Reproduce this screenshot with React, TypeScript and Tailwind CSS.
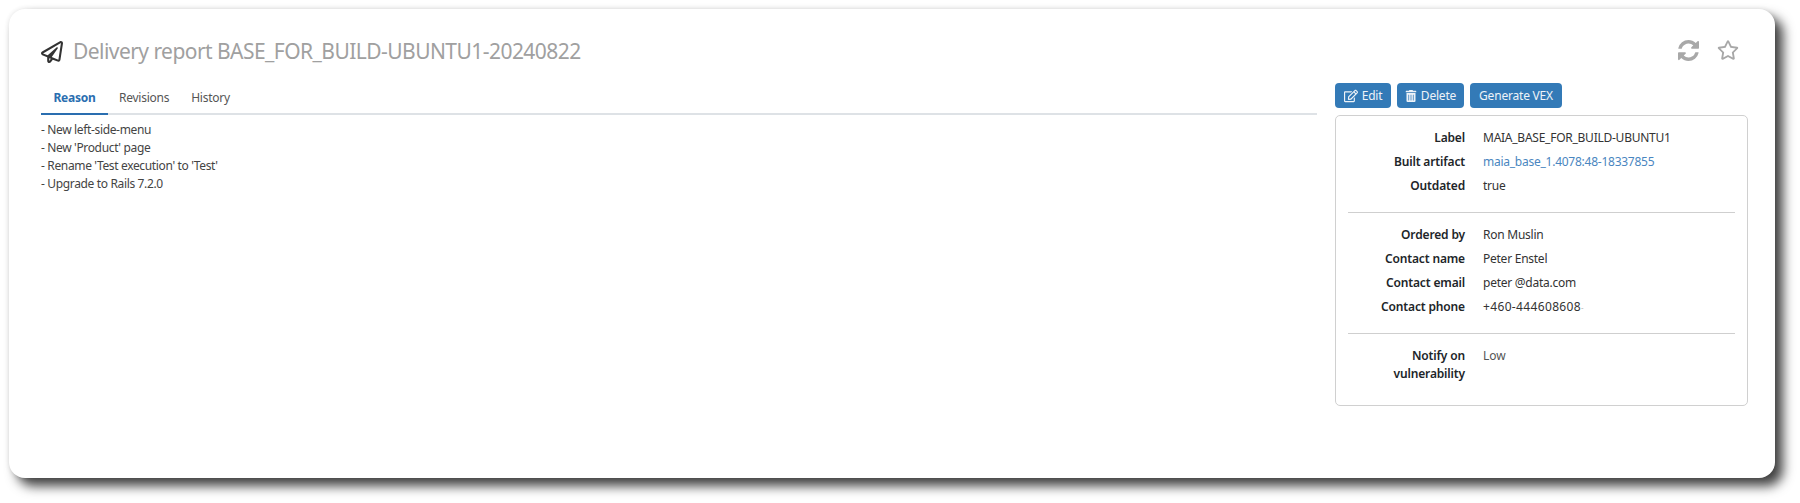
import { FaRegPaperPlane, FaRegStar, FaRegEdit, FaTrashAlt } from "react-icons/fa";

const groups: { k: string; v: string; link?: boolean; wide?: boolean }[][] = [
  [
    { k: "Label", v: "MAIA_BASE_FOR_BUILD-UBUNTU1" },
    { k: "Built artifact", v: "maia_base_1.4078:48-18337855", link: true },
    { k: "Outdated", v: "true" },
  ],
  [
    { k: "Ordered by", v: "Ron Muslin" },
    { k: "Contact name", v: "Peter Enstel" },
    { k: "Contact email", v: "peter @data.com" },
    { k: "Contact phone", v: "+460-444608608", wide: true },
  ],
];

function Row({ k, v, link, wide }: { k: string; v: string; link?: boolean; wide?: boolean }) {
  return (
    <div className="flex h-6 items-center">
      <div className="w-[117px] text-right font-semibold tracking-[-0.15px] text-[#212529]">{k}</div>
      <div className={`ml-[18px] ${wide ? "tracking-[0.35px]" : "tracking-[-0.25px]"} ${link ? "text-[#4a86c0]" : "text-[#333]"}`}>
        {v}
        {wide && <span className="text-[#bbb] text-[8px]">-</span>}
      </div>
    </div>
  );
}

const btn = "flex h-[25px] items-center justify-center gap-[4px] rounded-[4px] bg-[#337ab7] tracking-[-0.2px] text-[#eef3f8]";

export default function App() {
  return (
    <div className="h-[503px] overflow-hidden bg-white pl-[9px] pt-[9px] font-['Noto_Sans','Open_Sans',sans-serif] text-[12px]">
      <div className="h-[469px] w-[1766px] rounded-[16px] bg-white pl-[32px] pr-[27px] shadow-[8px_8px_12px_rgba(0,0,0,0.75),0_0_5px_rgba(0,0,0,0.1)]">
        <div className="flex h-[74px] items-center justify-between pt-[12px]">
          <div className="flex items-center gap-[10px]">
            <FaRegPaperPlane className="h-[22px] w-[22px] text-[#333]" />
            <h1 className="text-[21px] font-normal tracking-[-0.55px] text-[#a0a0a0]">Delivery report BASE_FOR_BUILD-UBUNTU1-20240822</h1>
          </div>
          <div className="mb-[4px] mr-[9px] flex items-center gap-[18px] text-[#a8a8a8]">
            <svg viewBox="128 128 1536 1536" className="h-[21px] w-[21px]" fill="currentColor">
              <path d="M1639 1056q0 5-1 7-64 268-268 434.5t-478 166.5q-146 0-282.5-55t-243.5-157l-129 129q-19 19-45 19t-45-19-19-45v-448q0-26 19-45t45-19h448q26 0 45 19t19 45-19 45l-137 137q71 66 161 102t187 36q134 0 250-65t186-179q11-17 53-117 8-23 30-23h192q13 0 22.5 9.5t9.5 22.5zm25-800v448q0 26-19 45t-45 19h-448q-26 0-45-19t-19-45 19-45l138-138q-148-137-349-137-134 0-250 65t-186 179q-11 17-53 117-8 23-30 23h-199q-13 0-22.5-9.5t-9.5-22.5v-7q65-268 270-434.5t480-166.5q146 0 284 55.5t245 156.5l130-129q19-19 45-19t45 19 19 45z" />
            </svg>
            <FaRegStar className="h-[22px] w-[22px]" />
          </div>
        </div>
        <div className="flex gap-[18px]">
          <div className="flex-1">
            <div className="flex h-[32px] items-center border-b-2 border-[#dee2e6] tracking-[-0.25px]">
              <div className="-mb-[2px] flex h-[32px] w-[67px] items-center justify-center border-b-2 border-[#2a6eb0] font-bold text-[#2a6eb0]">Reason</div>
              <div className="ml-[11px] text-[#555]">Revisions</div>
              <div className="ml-[22px] text-[#555]">History</div>
            </div>
            <div className="mt-[6px] leading-[18px] tracking-[-0.35px] text-[#444]">
              <div>- New left-side-menu</div>
              <div>- New 'Product' page</div>
              <div>- Rename 'Test execution' to 'Test'</div>
              <div>- Upgrade to Rails 7.2.0</div>
            </div>
          </div>
          <div className="w-[413px]">
            <div className="flex gap-[6px]">
              <div className={`${btn} w-[56px]`}><FaRegEdit className="h-[14px] w-[14px]" />Edit</div>
              <div className={`${btn} w-[67px]`}><FaTrashAlt className="h-[12px] w-[12px]" />Delete</div>
              <div className={`${btn} w-[92px]`}>Generate VEX</div>
            </div>
            <div className="mt-[7px] h-[291px] rounded-[5px] border border-[#d0d0d0] px-[12px] pt-[10px]">
              {groups.map((g, i) => (
                <div key={i} className="mb-[10px] border-b border-[#cfcfcf] pb-[14px]">
                  {g.map((r) => <Row key={r.k} {...r} />)}
                </div>
              ))}
              <div className="mt-[13px] flex leading-[18px]">
                <div className="w-[117px] text-right font-semibold tracking-[-0.15px] text-[#212529]">Notify on vulnerability</div>
                <div className="ml-[18px] text-[#555]">Low</div>
              </div>
            </div>
          </div>
        </div>
      </div>
    </div>
  );
}
